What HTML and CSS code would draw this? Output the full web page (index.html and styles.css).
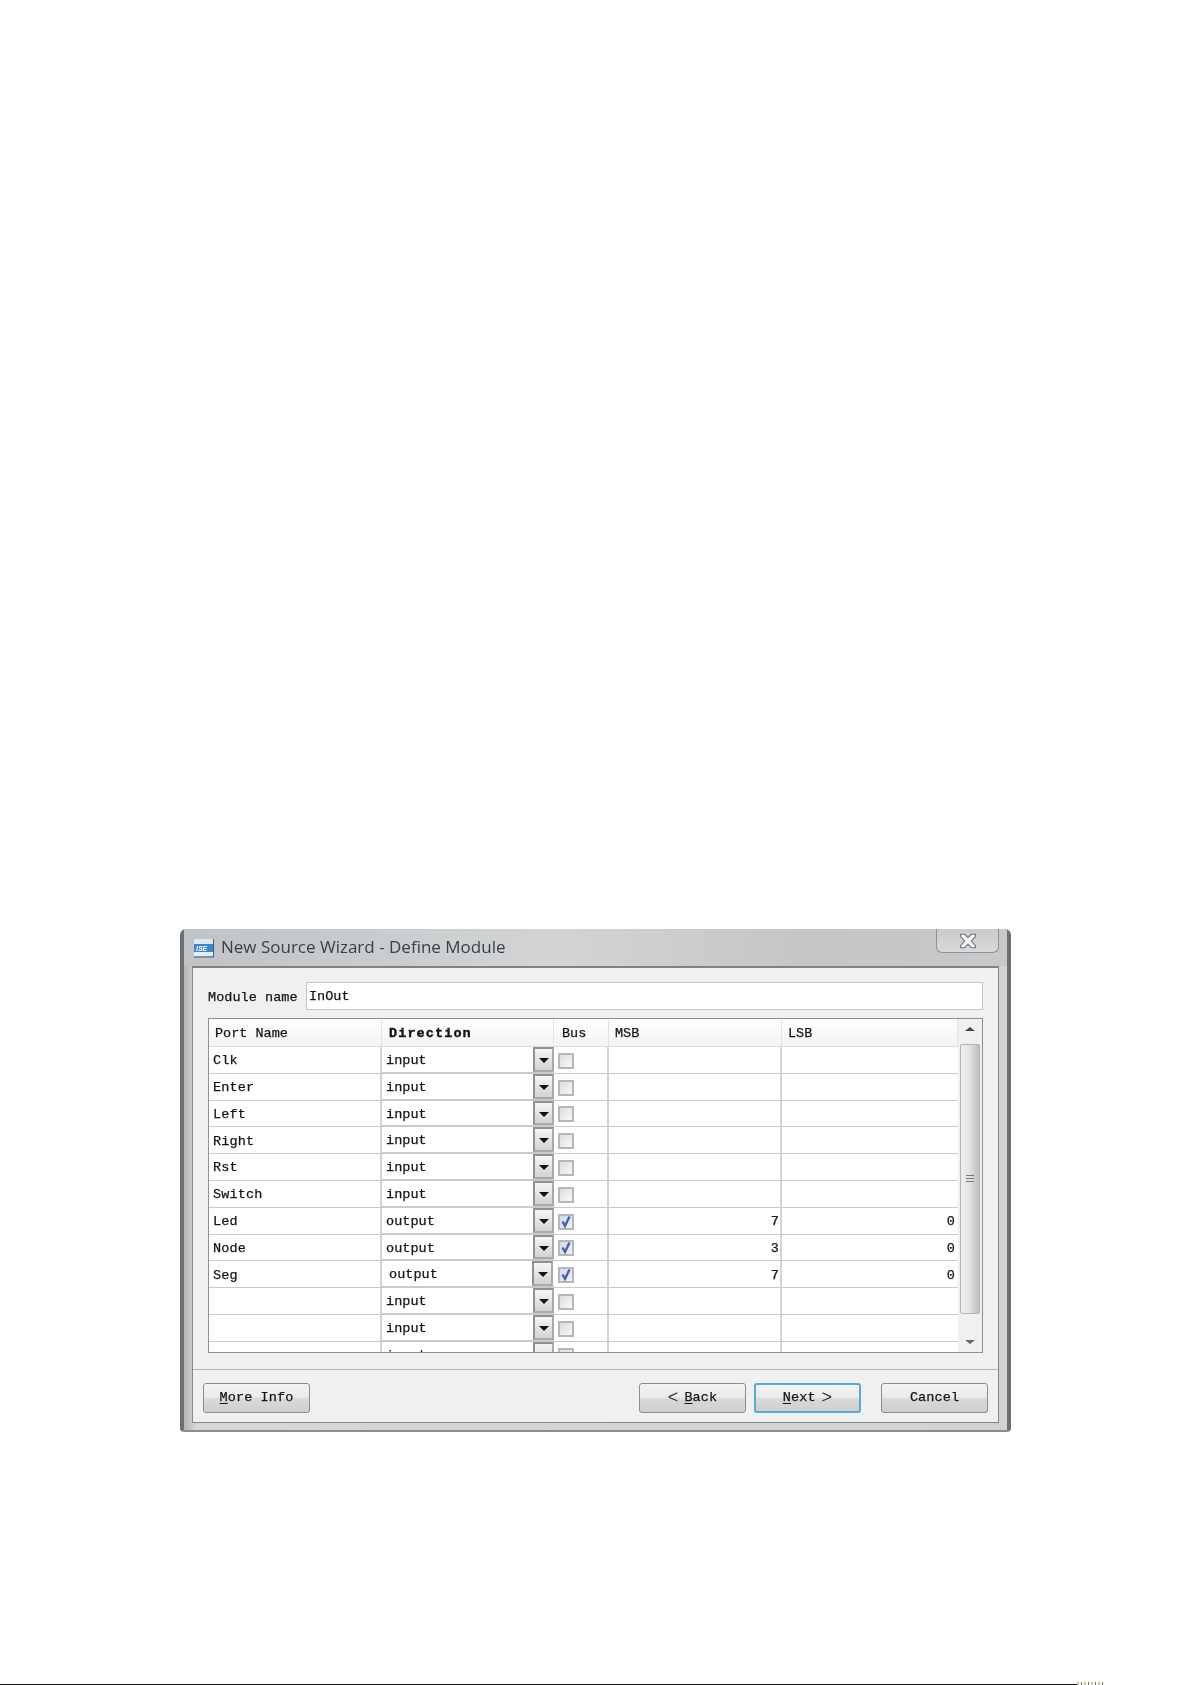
FILE: index.html
```html
<!DOCTYPE html>
<html lang="en">
<head>
<meta charset="utf-8">
<title>New Source Wizard - Define Module</title>
<link rel="stylesheet" href="styles.css">
</head>
<body>
<main class="page">
  <section class="window">
    <header class="titlebar">
      <svg class="app-icon" viewBox="0 0 20 20" aria-hidden="true">
        <rect x="0" y="1" width="20" height="18" fill="#9cc3e6"/>
        <rect x="0" y="1" width="19" height="5" fill="#dbe9f5"/>
        <rect x="0" y="6" width="19" height="8" fill="#3d86cc"/>
        <text x="2" y="13" class="app-icon-text">ISE</text>
        <rect x="0" y="14" width="19" height="4" fill="#e3edf6"/>
        <path d="M19.5 1v18H0" fill="none" stroke="#4c5a6a"/>
      </svg>
      <span class="title">New Source Wizard - Define Module</span>
      <span class="close">
        <svg viewBox="0 0 16 14" class="close-x" aria-hidden="true">
          <path d="M1.5 1h3.500l3 3 3-3h3.500v2l-3.500 4 3.500 4v2h-3.500l-3-3-3 3h-3.500v-2l3.500-4-3.500-4z" fill="#f4f5f6" stroke="#6f7377" stroke-width="1"/>
        </svg>
      </span>
    </header>
    <div class="panel">
      <div class="content">
        <div class="module-row">
          <label class="module-label">Module name</label>
          <div class="module-input">InOut</div>
        </div>
        <div class="grid-frame">
          <div class="table">
            <div class="head">
              <div class="hcell port">Port Name</div>
              <div class="hcell dir">Direction</div>
              <div class="hcell bus">Bus</div>
              <div class="hcell msb">MSB</div>
              <div class="hcell lsb">LSB</div>
            </div>
            <div class="row"><div class="cell port">Clk</div><div class="cell dir"><span class="combo"><span class="combo-text">input</span><span class="combo-btn"></span></span></div><div class="cell bus"><span class="check"></span></div><div class="cell msb"></div><div class="cell lsb"></div></div>
            <div class="row"><div class="cell port">Enter</div><div class="cell dir"><span class="combo"><span class="combo-text">input</span><span class="combo-btn"></span></span></div><div class="cell bus"><span class="check"></span></div><div class="cell msb"></div><div class="cell lsb"></div></div>
            <div class="row"><div class="cell port">Left</div><div class="cell dir"><span class="combo"><span class="combo-text">input</span><span class="combo-btn"></span></span></div><div class="cell bus"><span class="check"></span></div><div class="cell msb"></div><div class="cell lsb"></div></div>
            <div class="row"><div class="cell port">Right</div><div class="cell dir"><span class="combo"><span class="combo-text">input</span><span class="combo-btn"></span></span></div><div class="cell bus"><span class="check"></span></div><div class="cell msb"></div><div class="cell lsb"></div></div>
            <div class="row"><div class="cell port">Rst</div><div class="cell dir"><span class="combo"><span class="combo-text">input</span><span class="combo-btn"></span></span></div><div class="cell bus"><span class="check"></span></div><div class="cell msb"></div><div class="cell lsb"></div></div>
            <div class="row"><div class="cell port">Switch</div><div class="cell dir"><span class="combo"><span class="combo-text">input</span><span class="combo-btn"></span></span></div><div class="cell bus"><span class="check"></span></div><div class="cell msb"></div><div class="cell lsb"></div></div>
            <div class="row"><div class="cell port">Led</div><div class="cell dir"><span class="combo"><span class="combo-text">output</span><span class="combo-btn"></span></span></div><div class="cell bus"><span class="check check-on"><svg viewBox="0 0 14 14" class="tick"><path d="M3.500 7l2.500 4.500L10.500 2" fill="none" stroke="#4a5fae" stroke-width="2.400"/></svg></span></div><div class="cell msb num">7</div><div class="cell lsb num">0</div></div>
            <div class="row"><div class="cell port">Node</div><div class="cell dir"><span class="combo"><span class="combo-text">output</span><span class="combo-btn"></span></span></div><div class="cell bus"><span class="check check-on"><svg viewBox="0 0 14 14" class="tick"><path d="M3.500 7l2.500 4.500L10.500 2" fill="none" stroke="#4a5fae" stroke-width="2.400"/></svg></span></div><div class="cell msb num">3</div><div class="cell lsb num">0</div></div>
            <div class="row"><div class="cell port">Seg</div><div class="cell dir"><span class="combo combo-active"><span class="combo-text">output</span><span class="combo-btn"></span></span></div><div class="cell bus"><span class="check check-on"><svg viewBox="0 0 14 14" class="tick"><path d="M3.500 7l2.500 4.500L10.500 2" fill="none" stroke="#4a5fae" stroke-width="2.400"/></svg></span></div><div class="cell msb num">7</div><div class="cell lsb num">0</div></div>
            <div class="row"><div class="cell port"></div><div class="cell dir"><span class="combo"><span class="combo-text">input</span><span class="combo-btn"></span></span></div><div class="cell bus"><span class="check"></span></div><div class="cell msb"></div><div class="cell lsb"></div></div>
            <div class="row"><div class="cell port"></div><div class="cell dir"><span class="combo"><span class="combo-text">input</span><span class="combo-btn"></span></span></div><div class="cell bus"><span class="check"></span></div><div class="cell msb"></div><div class="cell lsb"></div></div>
            <div class="row"><div class="cell port"></div><div class="cell dir"><span class="combo"><span class="combo-text">input</span><span class="combo-btn"></span></span></div><div class="cell bus"><span class="check"></span></div><div class="cell msb"></div><div class="cell lsb"></div></div>
          </div>
          <div class="scrollbar">
            <span class="arrow-up"></span>
            <div class="thumb"><span class="grip"></span></div>
            <span class="arrow-down"></span>
          </div>
        </div>
      </div>
      <footer class="footer">
        <button class="btn"><u>M</u>ore Info</button>
        <div class="nav">
          <button class="btn"><span class="chev">&lt;</span><u>B</u>ack</button>
          <button class="btn btn-default"><u>N</u>ext<span class="chev chev-next">&gt;</span></button>
          <button class="btn btn-cancel">Cancel</button>
        </div>
      </footer>
    </div>
  </section>
</main>
<div class="page-end">
  <div class="page-rule"></div>
  <div class="page-noise"></div>
</div>
</body>
</html>
```
FILE: styles.css
```css
* { box-sizing: border-box; }
html, body { margin: 0; padding: 0; background: #fff; }
body { width: 1192px; height: 1685px; display: flex; flex-direction: column; overflow: hidden; }
.page { flex: 1; padding: 929px 0 0 180px; }
.page-end { display: flex; align-items: flex-end; height: 3px; flex: none; }
.page-rule { height: 1px; width: 1077px; background: #111; }
.page-noise { height: 3px; width: 26px; background: repeating-linear-gradient(90deg, #cfc9a8 0 2px, #fff 2px 4px, #6e6a5a 4px 5px, #fff 5px 7px); }

.window {
  width: 831px; height: 503px;
  background: linear-gradient(90deg, #b4b6b8 0, #d4d6d8 12px, #d0d2d4 100%);
  border-left: 4px solid #6d6f71; border-right: 4px solid #6d6f71; border-bottom: 2px solid #8a8c8e;
  border-radius: 6px 6px 4px 4px;
  display: flex; flex-direction: column;
  font: 13.5px/1 "Liberation Mono", monospace; color: #151515;
  -webkit-text-stroke: 0.25px #151515;
  filter: blur(0.35px);
}
.titlebar {
  height: 37px; flex: none; display: flex; align-items: center;
  padding: 0 10px 0 10px; position: relative;
  background: linear-gradient(90deg, #c0c4c7, #d2d4d5 45%, #c4c6c7 75%, #c6c8c9);
}
.app-icon { width: 20px; height: 20px; flex: none; margin-top: 1px; }
.app-icon-text { font: italic 700 7px "Liberation Sans", sans-serif; fill: #fff; stroke: none; -webkit-text-stroke: 0; }
.title { margin-left: 7px; margin-top: -2px; font: 17px "Open Sans", sans-serif; color: #3c3f42; -webkit-text-stroke: 0; }
.close {
  position: absolute; right: 8px; top: 0; width: 63px; height: 24px;
  border: 1px solid #8f9295; border-top: 0; border-radius: 0 0 6px 6px;
  background: linear-gradient(#c9cbcd, #d8d9da);
  display: flex; align-items: center; justify-content: center;
}
.close-x { width: 18px; height: 16px; }

.panel {
  flex: 1; margin: 0 8px 7px 8px; background: #f0f0f0;
  border: 1px solid #85888a; border-top: 2px solid #808385;
  display: flex; flex-direction: column;
}
.content { flex: 1; padding: 14px 15px 0 15px; }
.module-row { display: flex; align-items: center; height: 28px; }
.module-label { width: 98px; flex: none; white-space: pre; padding-top: 3px; letter-spacing: 0.05px; }
.module-input {
  flex: 1; height: 28px; background: #fff; border: 1px solid #c4c6c8;
  padding: 5px 2px 0; line-height: 18px;
}
.grid-frame {
  display: flex; margin-top: 8px; height: 335px; background: #fff;
  border: 1px solid #8e9092; overflow: hidden;
}
.table { width: 749px; flex: none; }
.head { display: flex; height: 28px; background: linear-gradient(#fff, #f2f3f4); border-bottom: 1px solid #dcdcdc; }
.hcell { padding: 8px 0 0 6px; border-right: 1px solid #e3e3e3; line-height: 14px; }
.hcell.dir { font-weight: 700; letter-spacing: 1.1px; padding-left: 7px; -webkit-text-stroke: 0.4px #151515; }
.hcell.bus { padding-left: 8px; }
.row { display: flex; height: 26.8px; border-bottom: 1px solid #c9cacb; }
.cell { border-right: 2px solid #d2d3d4; padding: 2px 3px 0 4px; display: flex; align-items: center; overflow: hidden; letter-spacing: 0.15px; }
.port { width: 173px; }
.dir { width: 172px; }
.bus { width: 55px; }
.msb { width: 173px; }
.lsb { width: 176px; }
.cell.lsb { border-right: 0; }
.num { justify-content: flex-end; padding-right: 1px; }
.lsb.num { padding-right: 3px; }
.cell.dir { padding: 0; align-items: stretch; overflow: visible; border-right: 0; }
.cell.bus { padding: 2px 0 0 3px; }
.combo { flex: 1; display: flex; background: #fff; height: 25.8px; border-bottom: 1px solid #c9cacb; }
.combo-text { flex: 1; padding: 6px 0 0 4px; line-height: 16px; letter-spacing: 0.05px; }
.combo-btn {
  width: 21px; flex: none; position: relative;
  border: 2px solid #8f9193; border-bottom-color: #a8aaac; border-right-color: #a8aaac;
  background: linear-gradient(#f6f6f6, #d2d2d2);
}
.combo-btn::after {
  content: ""; position: absolute; left: 3.5px; top: 9px;
  border: 5px solid transparent; border-top: 5px solid #111; border-bottom: 0;
}
.combo-active .combo-text { padding-left: 7px; }
.combo-active .combo-btn { margin-left: -1px; margin-right: 1px; }
.check {
  width: 16px; height: 16px; display: block; position: relative; flex: none; margin-left: 1px;
  border: 2px solid #b5b7b9; background: linear-gradient(135deg, #dcdddf, #f8f8f8);
}
.check-on { background: linear-gradient(135deg, #d5d9e6, #f0f1f6); }
.tick { position: absolute; left: -1px; top: -2px; width: 14px; height: 15px; }

.scrollbar { flex: 1; background: #f0f0f0; position: relative; display: flex; flex-direction: column; align-items: center; padding: 0 1px; }
.arrow-up { flex: none; margin-top: 8px; border: 5px solid transparent; border-bottom: 4px solid #444; border-top: 0; }
.thumb {
  position: absolute; left: 2px; right: 2px; top: 25px; height: 270px;
  background: linear-gradient(90deg, #eeeeef, #e4e4e6 45%, #bcbdc2);
  border: 1px solid #b2b3b6; border-radius: 2px;
  display: flex; align-items: center; justify-content: center;
}
.grip { width: 8px; height: 9px; background: repeating-linear-gradient(#777 0 1px, transparent 1px 3px); }
.arrow-down { position: absolute; bottom: 8px; border: 5px solid transparent; border-top: 4px solid #666; border-bottom: 0; }

.footer {
  height: 53px; flex: none; border-top: 1px solid #b4b6b8;
  display: flex; justify-content: space-between; padding: 13px 10px 0 10px;
}
.nav { display: flex; }
.btn {
  width: 107px; height: 30px; font: inherit; color: #151515; padding: 0;
  border: 1px solid #8b8d8f; border-radius: 3px;
  background: linear-gradient(#f3f3f3 0, #ebebeb 45%, #d9d9d9 55%, #cfcfcf 100%);
  -webkit-text-stroke: 0.25px #151515;
  letter-spacing: 0.1px;
}
.btn-default { margin-left: 8px; border: 2px solid #56acd6; }
.btn-cancel { margin-left: 20px; }
.btn u { text-underline-offset: 2px; }
.chev { font: 300 18px/0 "Liberation Sans", sans-serif; -webkit-text-stroke: 0; margin-right: 6px; color: #333; vertical-align: -2px; }
.chev-next { margin: 0 0 0 6px; }
```
